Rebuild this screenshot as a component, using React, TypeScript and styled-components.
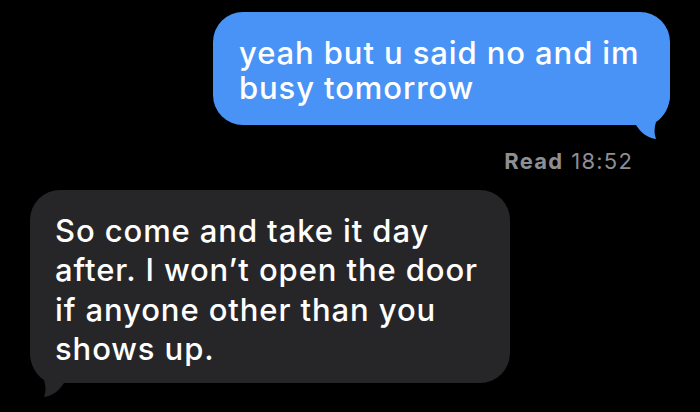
import React from 'react';
import styled, { createGlobalStyle } from 'styled-components';

const GlobalStyle = createGlobalStyle`
  html, body {
    margin: 0;
    padding: 0;
    background: #000;
  }
  body {
    width: 700px;
    height: 412px;
    overflow: hidden;
    font-family: Inter, "Liberation Sans", Arial, sans-serif;
    -webkit-font-smoothing: antialiased;
  }
`;

const Thread = styled.main`
  display: flex;
  flex-direction: column;
  padding: 12px 30px 0 30px;
  box-sizing: border-box;
  width: 700px;
  height: 412px;
  background: #000;
`;

const Row = styled.div<{ $out?: boolean }>`
  display: flex;
  justify-content: ${(p) => (p.$out ? 'flex-end' : 'flex-start')};
`;

const Bubble = styled.div<{ $out?: boolean }>`
  position: relative;
  z-index: 0;
  box-sizing: border-box;
  width: ${(p) => (p.$out ? '457px' : '480px')};
  padding: ${(p) => (p.$out ? '23px 20px 20px 26px' : '21px 20px 15px 25px')};
  border-radius: 30px;
  background: ${(p) => (p.$out ? '#4a93f6' : '#262629')};
  color: #fff;
  font-size: 31px;
  font-weight: 500;
  line-height: ${(p) => (p.$out ? '35px' : '39.3px')};
  letter-spacing: 0.9px;
  white-space: nowrap;
`;

const Line = styled.span`
  display: block;
`;

const Tail = styled.svg<{ $out?: boolean }>`
  position: absolute;
  z-index: -1;
  bottom: -14px;
  width: 40px;
  height: 46px;
  ${(p) => (p.$out ? 'right: 0;' : 'left: 0; transform: scaleX(-1);')}
`;

const Receipt = styled.div`
  display: flex;
  justify-content: flex-end;
  gap: 8px;
  padding: 23px 37px 0 0;
  margin-bottom: 16px;
  font-size: 22px;
  line-height: 26px;
  letter-spacing: 1.2px;
  color: #8e8e93;
`;

const ReceiptLabel = styled.span`
  font-weight: 700;
`;

function BubbleTail({ out, color }: { out?: boolean; color: string }) {
  return (
    <Tail $out={out} viewBox="0 0 40 46">
      <path
        d="M40 0 C40 14 34 24 26 29 C24 35 24 41 26 46 C18 45 11 40 6 32 L0 32 L0 0 Z"
        fill={color}
      />
    </Tail>
  );
}

export default function App() {
  return (
    <>
      <GlobalStyle />
      <Thread>
        <Row $out>
          <Bubble $out>
            <Line>yeah but u said no and im</Line>
            <Line>busy tomorrow</Line>
            <BubbleTail out color="#4a93f6" />
          </Bubble>
        </Row>
        <Receipt>
          <ReceiptLabel>Read</ReceiptLabel>
          <span>18:52</span>
        </Receipt>
        <Row>
          <Bubble>
            <Line>So come and take it day</Line>
            <Line>after. I won’t open the door</Line>
            <Line>if anyone other than you</Line>
            <Line>shows up.</Line>
            <BubbleTail color="#262629" />
          </Bubble>
        </Row>
      </Thread>
    </>
  );
}
